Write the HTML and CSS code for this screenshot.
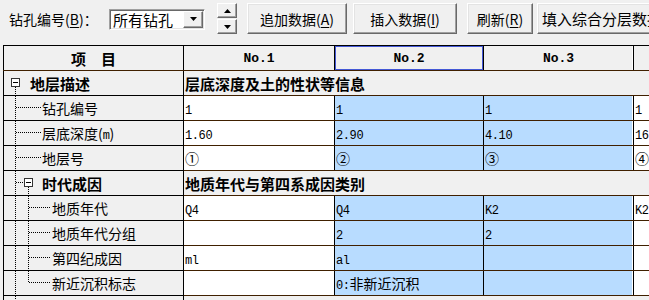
FILE: index.html
```html
<!DOCTYPE html>
<html lang="zh-CN">
<head>
<meta charset="utf-8">
<title>钻孔数据</title>
<link rel="stylesheet" href="styles.css">
</head>
<body>
<div class="toolbar">
  <span class="lbl">钻孔编号(<u>B</u>)：</span>
  <div class="combo">
    <span class="combo-text">所有钻孔</span>
    <span class="combo-btn"><svg width="7" height="4" viewBox="0 0 7 4"><polygon points="0,0 7,0 3.5,4" fill="#000"/></svg></span>
  </div>
  <div class="spin">
    <span class="spin-btn"><svg width="7" height="4" viewBox="0 0 7 4"><polygon points="0,4 7,4 3.5,0" fill="#000"/></svg></span>
    <span class="spin-btn"><svg width="7" height="4" viewBox="0 0 7 4"><polygon points="0,0 7,0 3.5,4" fill="#000"/></svg></span>
  </div>
  <button class="btn b-add">追加数据(<u>A</u>)</button>
  <button class="btn b-ins">插入数据(<u>I</u>)</button>
  <button class="btn b-ref">刷新(<u>R</u>)</button>
  <button class="btn b-fill">填入综合分层数据</button>
</div>

<table class="grid">
  <colgroup>
    <col class="w-item"><col class="w-c1"><col class="w-c2"><col class="w-c3"><col class="w-c4">
  </colgroup>
  <tr class="head">
    <th class="h-item">项　目</th>
    <th class="h-no">No.1</th>
    <th class="h-no sel-h cur">No.2</th>
    <th class="h-no sel-h last">No.3</th>
    <th class="h-no"></th>
  </tr>
  <tr class="group">
    <td class="item g1"><i class="t box"></i><i class="t v1 from-box"></i>地层描述</td>
    <td class="grp-text" colspan="4">层底深度及土的性状等信息</td>
  </tr>
  <tr>
    <td class="item l1"><i class="t v1"></i><i class="t h1"></i>钻孔编号</td>
    <td class="val"><span class="lat">1</span></td>
    <td class="val sel"><span class="lat">1</span></td>
    <td class="val sel last"><span class="lat">1</span></td>
    <td class="val"><span class="lat">1</span></td>
  </tr>
  <tr>
    <td class="item l1"><i class="t v1"></i><i class="t h1"></i>层底深度(<span class="lat">m</span>)</td>
    <td class="val"><span class="lat">1.60</span></td>
    <td class="val sel"><span class="lat">2.90</span></td>
    <td class="val sel last"><span class="lat">4.10</span></td>
    <td class="val"><span class="lat">16.20</span></td>
  </tr>
  <tr>
    <td class="item l1"><i class="t v1"></i><i class="t h1"></i>地层号</td>
    <td class="val">①</td>
    <td class="val sel">②</td>
    <td class="val sel last">③</td>
    <td class="val">④</td>
  </tr>
  <tr class="group">
    <td class="item g2"><i class="t v1"></i><i class="t h1 short"></i><i class="t box"></i><i class="t v2 from-box"></i>时代成因</td>
    <td class="grp-text" colspan="4">地质年代与第四系成因类别</td>
  </tr>
  <tr>
    <td class="item l2"><i class="t v1"></i><i class="t v2"></i><i class="t h2"></i>地质年代</td>
    <td class="val"><span class="lat">Q4</span></td>
    <td class="val sel"><span class="lat">Q4</span></td>
    <td class="val sel last"><span class="lat">K2</span></td>
    <td class="val"><span class="lat">K2</span></td>
  </tr>
  <tr>
    <td class="item l2"><i class="t v1"></i><i class="t v2"></i><i class="t h2"></i>地质年代分组</td>
    <td class="val"></td>
    <td class="val sel"><span class="lat">2</span></td>
    <td class="val sel last"><span class="lat">2</span></td>
    <td class="val"></td>
  </tr>
  <tr>
    <td class="item l2"><i class="t v1"></i><i class="t v2"></i><i class="t h2"></i>第四纪成因</td>
    <td class="val"><span class="lat">ml</span></td>
    <td class="val sel"><span class="lat">al</span></td>
    <td class="val sel last"></td>
    <td class="val"></td>
  </tr>
  <tr>
    <td class="item l2"><i class="t v1"></i><i class="t v2 to-mid"></i><i class="t h2"></i>新近沉积标志</td>
    <td class="val"></td>
    <td class="val sel"><span class="lat">0:</span>非新近沉积</td>
    <td class="val sel last"></td>
    <td class="val"></td>
  </tr>
  <tr class="group">
    <td class="item g1"><i class="t v1"></i></td>
    <td class="grp-text" colspan="4"></td>
  </tr>
</table>
</body>
</html>
```

FILE: styles.css
```css
html, body {
  margin: 0;
  padding: 0;
}
body {
  width: 649px;
  height: 300px;
  overflow: hidden;
  background: #f0f0f0;
  color: #000;
  font-family: "Noto Sans CJK SC", sans-serif;
  font-size: 14px;
}
u { text-decoration: underline; text-underline-offset: 2px; }

/* ---------- toolbar ---------- */
.toolbar {
  height: 37px;
  display: flex;
  align-items: center;
  white-space: nowrap;
}
.toolbar > * { flex-shrink: 0; }
.lbl {
  margin-left: 9px;
  width: 100px;
  line-height: 20px;
}
.combo {
  width: 96px;
  height: 21px;
  box-sizing: border-box;
  margin-top: 1px;
  border: 1px solid;
  border-color: #a0a0a0 #ffffff #ffffff #a0a0a0;
  box-shadow: inset 1px 1px 0 #696969, inset -1px -1px 0 #e3e3e3;
  background: #fff;
  display: flex;
  align-items: center;
}
.combo-text {
  flex: 1;
  padding-left: 3px;
  font-size: 15px;
  line-height: 17px;
}
.combo-btn {
  width: 20px;
  height: 17px;
  margin-right: 1px;
  box-sizing: border-box;
  background: #f0f0f0;
  border: 1px solid;
  border-color: #ffffff #696969 #696969 #ffffff;
  box-shadow: inset -1px -1px 0 #a0a0a0;
  display: flex;
  align-items: center;
  justify-content: center;
}
.spin {
  margin-left: 12px;
  width: 20px;
  display: flex;
  flex-direction: column;
  gap: 1px;
}
.spin-btn {
  height: 15px;
  box-sizing: border-box;
  border: 1px solid;
  border-color: #ffffff #696969 #696969 #ffffff;
  box-shadow: inset -1px -1px 0 #a0a0a0;
  background: #f0f0f0;
  display: flex;
  align-items: center;
  justify-content: center;
}
.btn {
  height: 31px;
  padding: 0;
  box-sizing: border-box;
  border: 1px solid;
  border-color: #ffffff #696969 #696969 #ffffff;
  box-shadow: inset -1px -1px 0 #a0a0a0, inset 1px 1px 0 #e3e3e3;
  background: #f0f0f0;
  font-family: "Noto Sans CJK SC", sans-serif;
  font-size: 14px;
  color: #000;
  text-align: center;
  white-space: nowrap;
}
.b-add { margin-left: 10px; width: 100px; }
.b-ins { margin-left: 6px; width: 104px; }
.b-ref { margin-left: 10px; width: 66px; }
.b-fill { margin-left: 4px; width: 130px; text-align: left; padding-left: 4px; font-size: 15px; }

/* ---------- grid ---------- */
.grid {
  margin: 8px 0 0 3px;
  border-collapse: collapse;
  table-layout: fixed;
  width: 730px;
}
.w-item { width: 180px; }
.w-c1 { width: 151px; }
.w-c2 { width: 149px; }
.w-c3 { width: 150px; }
.w-c4 { width: 100px; }

.grid th, .grid td {
  height: 24px;
  padding: 0;
  border: 1px solid #000;
  white-space: nowrap;
  overflow: hidden;
  vertical-align: middle;
}
.grid .head th {
  background: #f0f0f0;
  border-bottom-color: #402000;
  font-weight: bold;
  text-align: center;
}
.grid .h-item {
  font-size: 15px;
}
.grid .h-no {
  font-family: "Liberation Mono", monospace;
  font-size: 13px;
}
.grid .sel-h { background: #b9d4ef; }
.grid .cur { box-shadow: inset 0 0 0 1px #4458d6; }
.grid .sel-h.last { box-shadow: inset -1px 0 0 #ffffff; }

.grid .item {
  position: relative;
  background: #f0f0f0;
  text-align: left;
}
.grid .l1, .grid .g2 { padding-left: 38px; }
.grid .l2 { padding-left: 48px; }
.grid .g1 { padding-left: 26px; }
.grid .group .item, .grid .grp-text {
  font-weight: bold;
  font-size: 15px;
}
.grid .grp-text {
  background: #f0f0f0;
  border-top-color: #402000;
  border-bottom-color: #402000;
  border-right: none;
  padding-left: 1px;
}
.grid .val {
  background: #fff;
  border-top-color: #402000;
  border-bottom-color: #402000;
  padding-left: 1px;
}
.grid .sel { background: #b8dcff; }
.grid .sel.last { box-shadow: inset -1px 0 0 #ffffff; }
.lat {
  font-family: "Liberation Mono", monospace;
  font-size: 12px;
  letter-spacing: -0.4px;
}

/* tree connectors */
.t { position: absolute; display: block; }
.v1, .v2 {
  width: 1px;
  top: 0;
  bottom: 0;
  background: repeating-linear-gradient(to bottom, #000 0 1px, transparent 1px 2px);
}
.v1 { left: 11px; }
.v2 { left: 24px; }
.t.from-box { top: 16px; }
.t.to-mid { bottom: auto; height: 12px; }
.h1, .h2 {
  height: 1px;
  top: 11px;
  background: repeating-linear-gradient(to right, #000 0 1px, transparent 1px 2px);
}
.h1 { left: 12px; width: 25px; }
.h1.short { width: 8px; }
.h2 { left: 25px; width: 22px; }
.box {
  top: 7px;
  width: 9px;
  height: 9px;
  box-sizing: border-box;
  border: 1px solid #333;
  background: #fff;
}
.g1 .box { left: 7px; }
.g2 .box { left: 20px; }
.box::after {
  content: "";
  position: absolute;
  left: 1px;
  top: 3px;
  width: 5px;
  height: 1px;
  background: #000;
}
```
